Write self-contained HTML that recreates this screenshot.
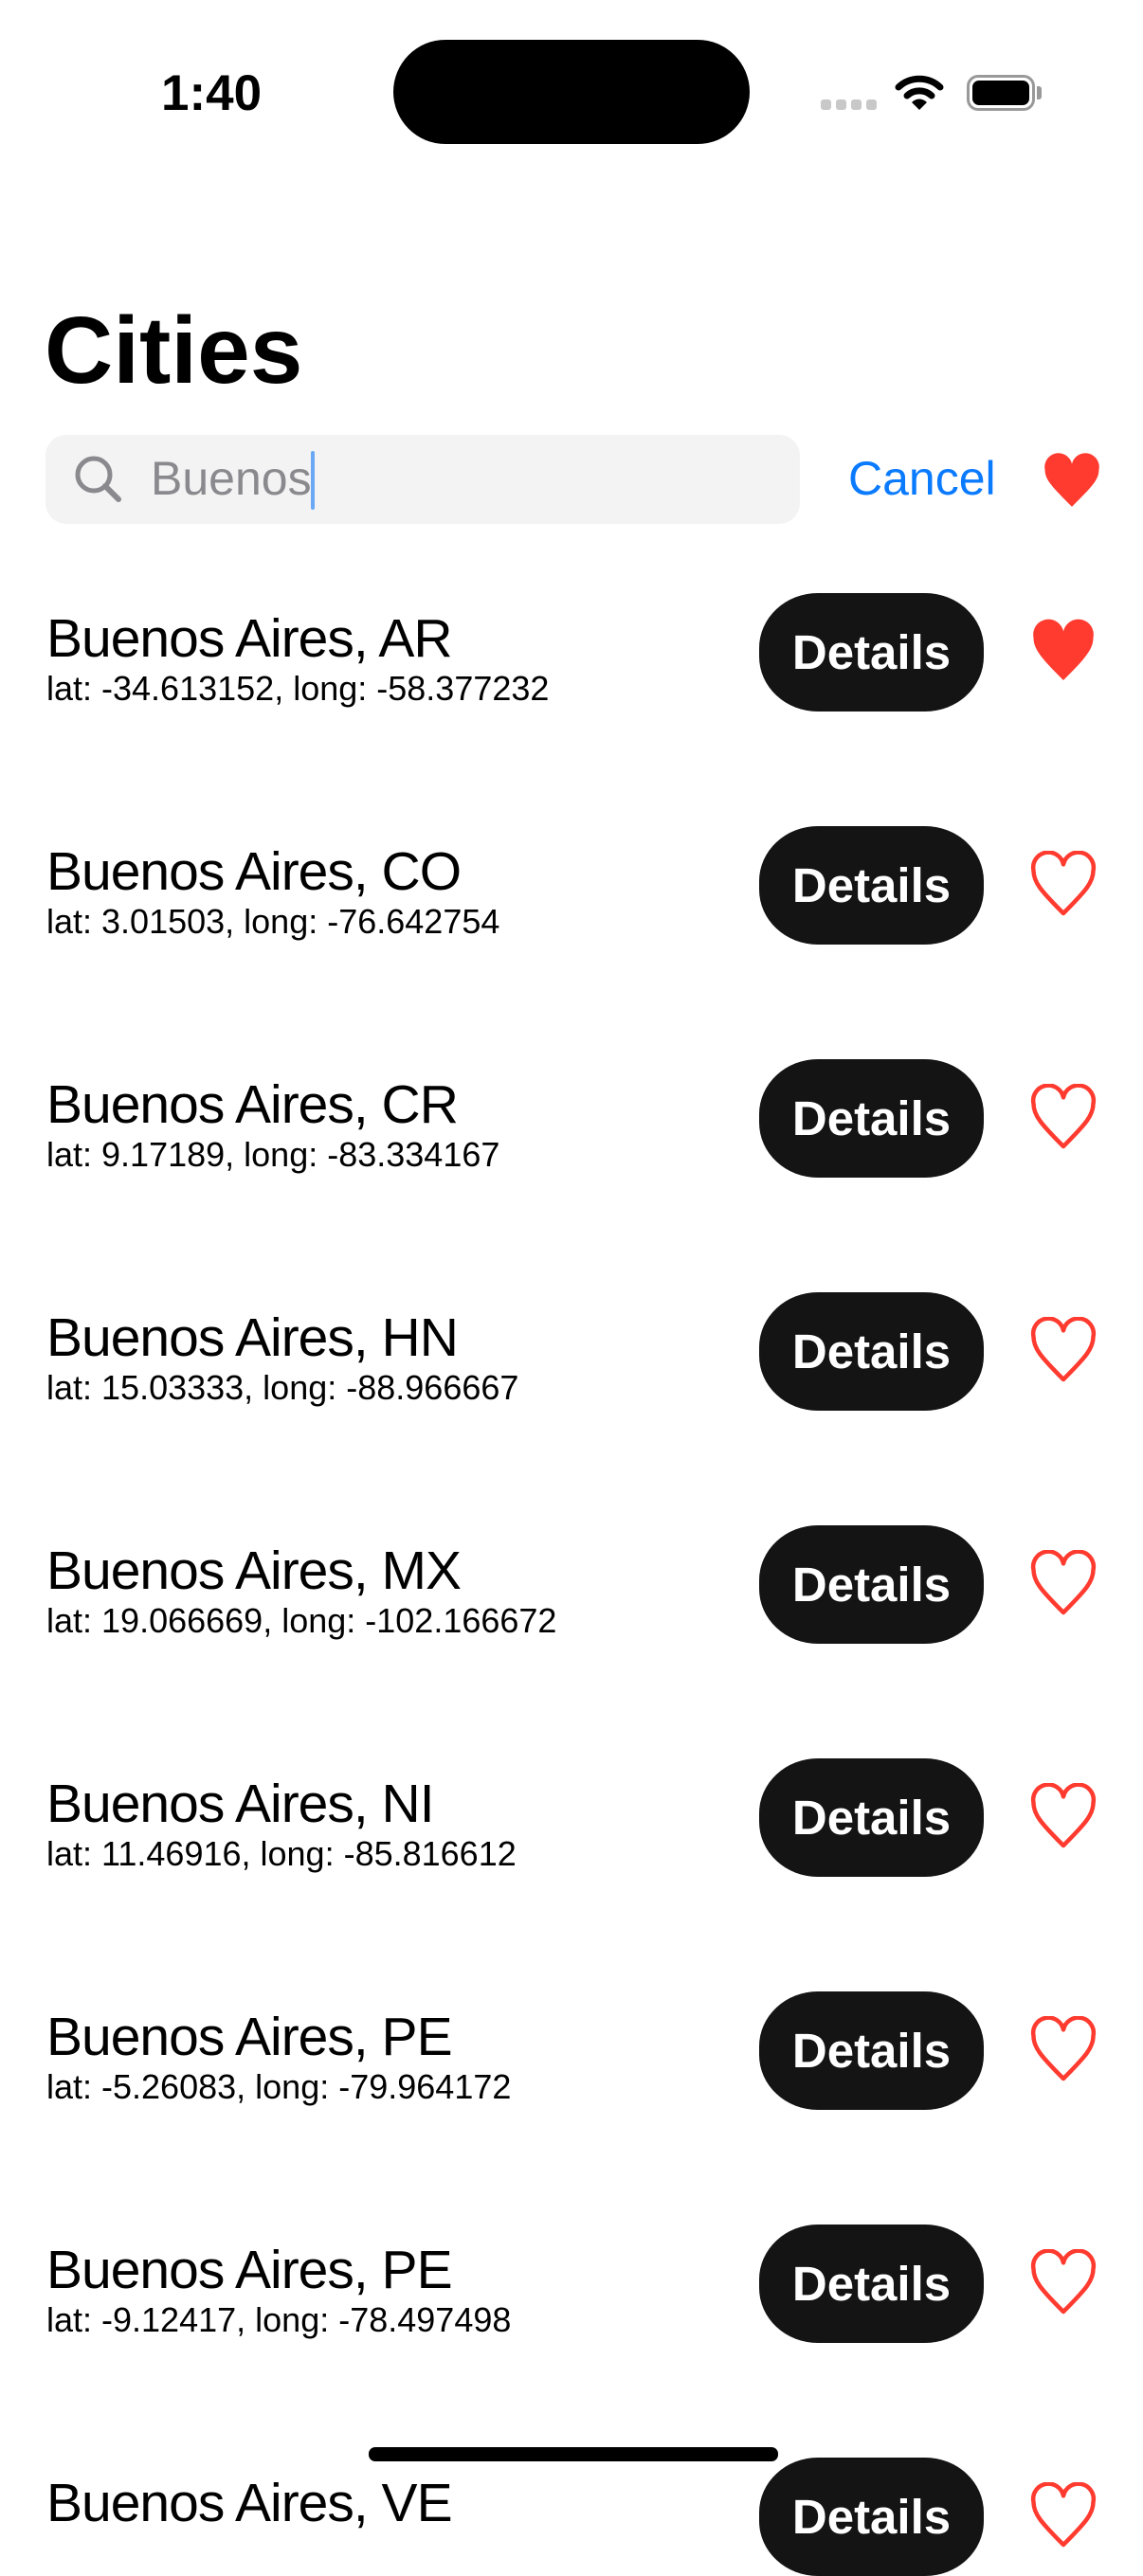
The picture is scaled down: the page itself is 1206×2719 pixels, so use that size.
<!DOCTYPE html>
<html><head><meta charset="utf-8"><style>
*{margin:0;padding:0;box-sizing:border-box}
body{width:1206px;height:2622px;background:#fff;position:relative;overflow:hidden;font-family:"Liberation Sans",sans-serif;color:#000}
.a{position:absolute;white-space:nowrap}
.t{font-size:57px;letter-spacing:-1px;left:49px;line-height:1}
.s{font-size:36px;left:49px;line-height:1}
.b{position:absolute;left:801px;width:237px;height:125px;background:#141414;border-radius:62px/58px;color:#fff;font-weight:bold;font-size:51px;display:flex;align-items:center;justify-content:center}
.h{position:absolute;left:1086px;width:72px;height:72px}
</style></head><body>
<div class="a" style="left:170px;top:68px;font-size:53px;font-weight:bold">1:40</div>
<div class="a" style="left:415px;top:42px;width:376px;height:110px;background:#000;border-radius:55px"></div>
<div class="a" style="left:866px;top:105px;width:59px;height:11px">
<span style="position:absolute;left:0;width:11px;height:11px;border-radius:3px;background:#c8c8c8"></span>
<span style="position:absolute;left:16px;width:11px;height:11px;border-radius:3px;background:#c8c8c8"></span>
<span style="position:absolute;left:32px;width:11px;height:11px;border-radius:3px;background:#c8c8c8"></span>
<span style="position:absolute;left:48px;width:11px;height:11px;border-radius:3px;background:#c8c8c8"></span></div>
<svg class="a" style="left:944px;top:78px" width="52" height="40" viewBox="0 0 52 40"><path d="M4 14 A32 32 0 0 1 48 14" stroke="#000" stroke-width="7" fill="none" stroke-linecap="round"/><path d="M13 23 A19 19 0 0 1 39 23" stroke="#000" stroke-width="7" fill="none" stroke-linecap="round"/><path d="M26 38 L18 30 A11 11 0 0 1 34 30 Z" fill="#000"/></svg>
<div class="a" style="left:1020px;top:79px;width:72px;height:38px;border:3px solid #999;border-radius:12px"><div style="position:absolute;left:3px;top:3px;right:3px;bottom:3px;background:#000;border-radius:7px"></div></div>
<div class="a" style="left:1094px;top:91px;width:5px;height:14px;background:#999;border-radius:0 3px 3px 0"></div>
<div class="a" style="left:47px;top:320px;font-size:100px;font-weight:bold;line-height:1">Cities</div>
<div class="a" style="left:48px;top:459px;width:796px;height:94px;background:#f3f3f4;border-radius:22px"></div>
<svg class="a" style="left:76px;top:478px" width="56" height="56" viewBox="0 0 56 56"><circle cx="23" cy="23" r="17" stroke="#8a8a8e" stroke-width="5" fill="none"/><path d="M35 35 L49 49" stroke="#8a8a8e" stroke-width="6" stroke-linecap="round"/></svg>
<div class="a" style="left:159px;top:480px;font-size:50px;color:#8a8a8e;line-height:1">Buenos</div>
<div class="a" style="left:328px;top:476px;width:4px;height:62px;background:#6aa8f5;border-radius:2px"></div>
<div class="a" style="left:895px;top:480px;font-size:50px;color:#0a7aff;line-height:1">Cancel</div>
<svg class="a" style="left:1100px;top:478px" width="62" height="62" viewBox="0 0 24 24"><path d="M12 22 C4 14 1 11 1 7 A5.5 5.5 0 0 1 12 4.5 A5.5 5.5 0 0 1 23 7 C23 11 20 14 12 22Z" fill="#ff3b30"/></svg>

<div id="rows"></div>
<div class="a" style="left:389px;top:2583px;width:432px;height:15px;background:#000;border-radius:7px;z-index:2"></div>
<script>
var d=[["AR","-34.613152","-58.377232",1],["CO","3.01503","-76.642754"],["CR","9.17189","-83.334167"],["HN","15.03333","-88.966667"],["MX","19.066669","-102.166672"],["NI","11.46916","-85.816612"],["PE","-5.26083","-79.964172"],["PE","-9.12417","-78.497498"],["VE","",""]];
var h="";
d.forEach(function(r,i){var y=626+i*246;
h+='<div class="a t" style="top:'+(y+20)+'px">Buenos Aires, '+r[0]+'</div>';
if(r[1])h+='<div class="a s" style="top:'+(y+83)+'px">lat: '+r[1]+', long: '+r[2]+'</div>';
h+='<div class="b" style="top:'+y+'px">Details</div>';
h+='<svg class="h" style="top:'+(y+26)+'px" viewBox="0 0 24 24"><path d="M12 22 C4 14 1.5 11 1.5 7 A5.2 5.2 0 0 1 12 4.8 A5.2 5.2 0 0 1 22.5 7 C22.5 11 20 14 12 22Z" '+(r[3]?'fill="#ff3b30"':'fill="none" stroke="#ff3b30" stroke-width="1.5" stroke-linejoin="round"')+'/></svg>';});
document.getElementById('rows').innerHTML=h;
</script>
</body></html>
